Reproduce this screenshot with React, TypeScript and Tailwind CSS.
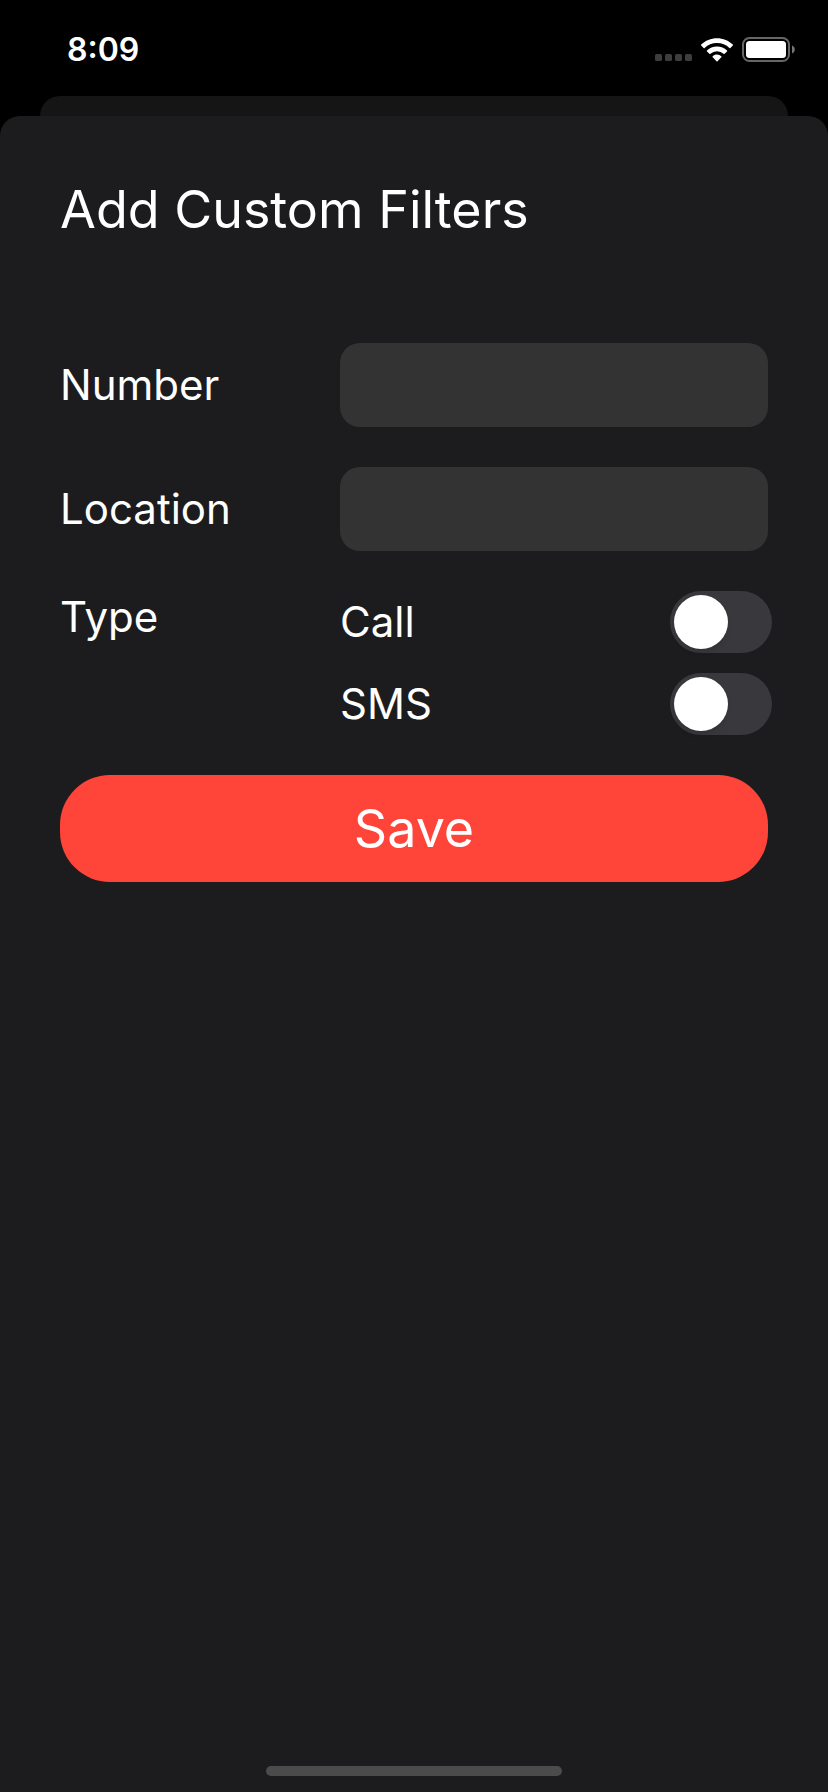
import { useState } from "react";

function SignalDots() {
  return (
    <svg width="37" height="8" viewBox="0 0 37 8" className="mt-4" aria-hidden="true">
      {[0, 10, 20, 30].map((x) => (
        <rect key={x} x={x} y="0" width="7" height="7" rx="1.6" fill="#3d3d3d" />
      ))}
    </svg>
  );
}

function WifiIcon() {
  return (
    <svg width="34" height="26" viewBox="0 0 34 26" fill="#fff" aria-hidden="true">
      <path d="M17 1.200C10.900 1.200 5.300 3.600 1.200 7.600a.7.700 0 0 0 0 1l2.400 2.400a.7.700 0 0 0 1 0A17.800 17.800 0 0 1 17 6.100c4.800 0 9.200 1.900 12.400 4.900a.7.700 0 0 0 1 0l2.400-2.400a.7.700 0 0 0 0-1C28.700 3.600 23.100 1.200 17 1.200z" />
      <path d="M17 9.500c-3.900 0-7.400 1.500-10 3.900a.7.700 0 0 0 0 1l2.400 2.400a.7.700 0 0 0 1 0 9.800 9.800 0 0 1 13.200 0 .7.700 0 0 0 1 0l2.400-2.400a.7.700 0 0 0 0-1c-2.600-2.400-6.100-3.900-10-3.900z" />
      <path d="M17 17.600c-1.700 0-3.200.6-4.300 1.600a.7.700 0 0 0 0 1l3.800 4a.7.700 0 0 0 1 0l3.800-4a.7.700 0 0 0 0-1A6.300 6.300 0 0 0 17 17.600z" />
    </svg>
  );
}

function BatteryIcon() {
  return (
    <svg width="54" height="26" viewBox="0 0 54 26" aria-hidden="true">
      <rect x="1" y="1" width="46" height="23" rx="6.500" fill="none" stroke="#666" strokeWidth="2" />
      <rect x="4" y="4" width="40" height="17" rx="3.500" fill="#fff" />
      <path d="M50 8.500c1.800.7 2.800 2.200 2.800 4s-1 3.300-2.800 4z" fill="#757575" />
    </svg>
  );
}

function TextField({ id, label }: { id: string; label: string }) {
  const [value, setValue] = useState("");
  return (
    <div className="grid grid-cols-[280px_1fr] items-center">
      <label htmlFor={id} className="text-[42px] leading-none">
        {label}
      </label>
      <input
        id={id}
        type="text"
        value={value}
        onChange={(e) => setValue(e.target.value)}
        className="h-21 w-full min-w-0 rounded-[20px] bg-[#333333] px-5 text-[42px] outline-none"
      />
    </div>
  );
}

function Toggle({ id, label }: { id: string; label: string }) {
  const [on, setOn] = useState(false);
  return (
    <div className="-mr-1 flex items-center justify-between">
      <label htmlFor={id} className="text-[42px] leading-none">
        {label}
      </label>
      <input
        id={id}
        type="checkbox"
        role="switch"
        checked={on}
        onChange={(e) => setOn(e.target.checked)}
        className="flex h-[62px] w-[102px] cursor-pointer appearance-none items-center rounded-full bg-[#39393d] p-1 before:size-[54px] before:rounded-full before:bg-white before:shadow-md before:content-[''] checked:justify-end checked:bg-[#30d158]"
      />
    </div>
  );
}

export default function App() {
  return (
    <div className="flex min-h-screen flex-col bg-black font-[Inter,'Liberation_Sans',sans-serif] text-white">
      <header className="flex h-24 items-center justify-between pr-8 pl-[67px]">
        <time className="pt-1 text-[32px] leading-none font-semibold">8:09</time>
        <div className="flex items-center gap-2 pt-1">
          <SignalDots />
          <WifiIcon />
          <BatteryIcon />
        </div>
      </header>
      <div className="mx-10 h-5 rounded-t-[20px] bg-[#151515]" />
      <main className="flex flex-1 flex-col rounded-t-[20px] bg-[#1c1c1e] px-15 pt-16">
        <h1 className="text-[52px] leading-[60px]">Add Custom Filters</h1>
        <form className="mt-[103px] flex flex-col gap-10" onSubmit={(e) => e.preventDefault()}>
          <TextField id="number" label="Number" />
          <TextField id="location" label="Location" />
          <fieldset className="grid grid-cols-[280px_1fr]" aria-labelledby="type-label">
            <span id="type-label" className="text-[42px] leading-[52px]">
              Type
            </span>
            <div className="flex flex-col gap-5">
              <Toggle id="call" label="Call" />
              <Toggle id="sms" label="SMS" />
            </div>
          </fieldset>
          <button
            type="submit"
            className="h-[107px] cursor-pointer rounded-[50px] bg-[#ff453a] text-[52px] leading-none"
          >
            Save
          </button>
        </form>
        <div className="mt-auto mb-4 h-[10px] w-[296px] self-center rounded-full bg-[#4b4b4b]" />
      </main>
    </div>
  );
}
